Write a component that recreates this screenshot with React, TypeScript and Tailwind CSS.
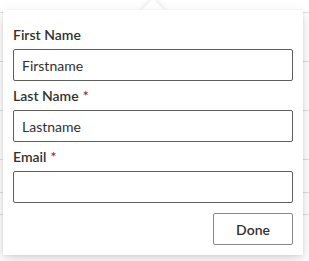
import React from "react";

const rows = [13, 49, 49, 49, 33, 22];

function Field({ label, required, value }: { label: string; required?: boolean; value: string }) {
  return (
    <div className="flex flex-col">
      <label className="pt-[5px] pb-[5px] text-[14px] leading-[19px] font-semibold text-[#323130]">
        {label}
        {required && <span className="text-[#a4262c] pl-[4px]">*</span>}
      </label>
      <div className="h-[32px] border border-[#605e5c] rounded-[2px] flex items-center px-[8px] text-[14px] text-[#323130]">
        {value}
      </div>
    </div>
  );
}

export default function App() {
  return (
    <div
      className="relative w-[309px] h-[261px] bg-white overflow-hidden"
      style={{ fontFamily: "Lato, 'Segoe UI', sans-serif" }}
    >
      <div className="flex flex-col">
        {rows.map((h, i) => (
          <div key={i} className="border-b border-[#e1dfdd]" style={{ height: h }} />
        ))}
      </div>
      <div className="absolute left-[3px] top-[10px] w-[300px]">
        <div className="absolute left-[142px] top-[-8px] w-[16px] h-[16px] bg-white rotate-45 shadow-[0_0_6px_rgba(0,0,0,0.13)]" />
        <div className="relative bg-white shadow-[0_6.4px_14.4px_0_rgba(0,0,0,0.132),0_1.2px_3.6px_0_rgba(0,0,0,0.108)] px-[10px] pt-[10px] pb-[10px]">
          <Field label="First Name" value="Firstname" />
          <Field label="Last Name" required value="Lastname" />
          <Field label="Email" required value="" />
          <div className="flex justify-end mt-[10px]">
            <button className="w-[80px] h-[32px] border border-[#8a8886] rounded-[2px] bg-white text-[14px] font-semibold text-[#323130]">
              Done
            </button>
          </div>
        </div>
      </div>
    </div>
  );
}
